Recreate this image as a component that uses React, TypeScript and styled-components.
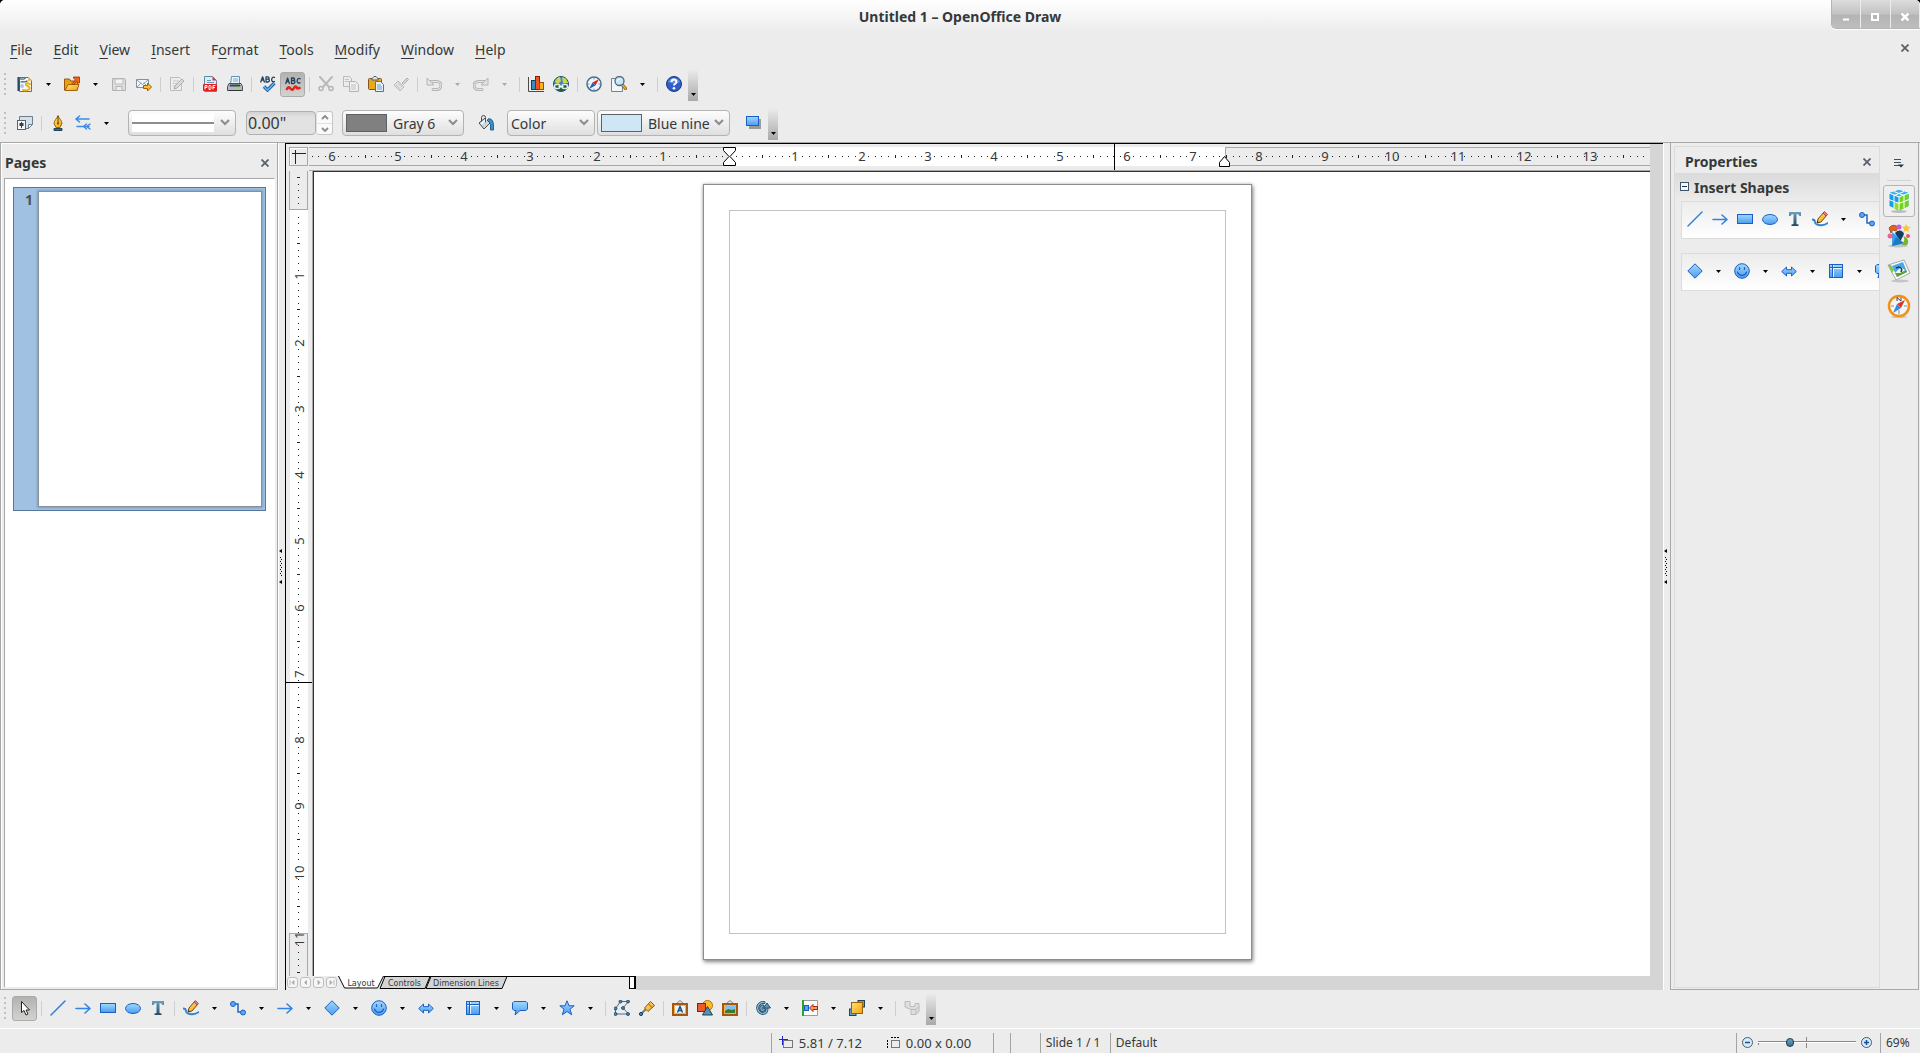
import React from "react";
import styled, { createGlobalStyle, css } from "styled-components";

const GlobalStyle = createGlobalStyle`
  * { box-sizing: border-box; }
  html, body { margin: 0; padding: 0; background: #000; }
  body { font-family: "Noto Sans", "Open Sans", sans-serif; font-size: 14px; color: #34393b; }
  button, input, select { font: inherit; color: inherit; margin: 0; }
`;

/* ---------- icons ---------- */

const HiddenSvg = styled.svg`
  position: absolute;
`;

const Defs = () => (
  <HiddenSvg width="0" height="0" aria-hidden="true">
    <defs>
      <linearGradient id="blue" x1="0" y1="0" x2="0" y2="1">
        <stop offset="0" stopColor="#a2d8fc" />
        <stop offset="1" stopColor="#4a9cf2" />
      </linearGradient>
      <linearGradient id="gold" x1="0" y1="0" x2="1" y2="1">
        <stop offset="0" stopColor="#ffe27a" />
        <stop offset="1" stopColor="#f0a20a" />
      </linearGradient>
      <linearGradient id="steel" x1="0" y1="0" x2="0" y2="1">
        <stop offset="0" stopColor="#6aa0c0" />
        <stop offset="1" stopColor="#234a66" />
      </linearGradient>
    </defs>
  </HiddenSvg>
);

const B = "#1c5fc4";
const P = { fill: "none", strokeLinecap: "round", strokeLinejoin: "round" } as const;

const glyphs: Record<string, React.ReactNode> = {
  newDoc: (
    <>
      <path d="M2.500 1.500h9l3 3v11h-12z" fill="#f4f8fb" stroke="#56738c" />
      <path d="M11 1l4 4h-4z" fill="#e8c46a" />
      <path d="M1.500 1v14" stroke="#24435c" strokeWidth="2" />
      <path d="M1 3.500c2-2 4 1 7-1M4 6c2-1 4 1 6-1" {...P} stroke="#3e6684" strokeWidth="1.300" />
      <path d="M6 14c5 1 8-1 6-3s-5-2-2-4l3 1" {...P} stroke="#f2b21c" strokeWidth="2" />
      <circle cx="5" cy="10" r="2" fill="#a8cbe4" />
    </>
  ),
  open: (
    <>
      <path d="M.5 14V3h5l1 2h7v9z" fill="#e8a20f" stroke="#96570a" />
      <path d="M1 14.500l3-6h11l-2 6z" fill="url(#gold)" stroke="#a3620a" />
      <path d="M8 7.500l3.500-3.500-2-2v-1h6v6h-1l-2-1.500-3 3.500z" fill="#f2661e" stroke="#9c2a0a" strokeWidth=".8" />
    </>
  ),
  save: (
    <>
      <path d="M1.500 2.500h12l1 1v11h-13z" fill="#dedede" stroke="#b0b0b0" />
      <path d="M4 3h8v5H4z" fill="#f3f3f3" stroke="#bcbcbc" />
      <path d="M5 10.500h6v4H5z" fill="#eee" stroke="#b4b4b4" />
    </>
  ),
  mail: (
    <>
      <path d="M.5 3.500h12v8H.5z" fill="#f2f6fa" stroke="#7e93a6" />
      <path d="M1 4l5.500 4.500L12 4M1 11l4-4M12 11L8 7" {...P} stroke="#8ba0b2" />
      <path d="M7.500 9.500h4v-2.500l4 4-4 4V12.500h-4z" fill="#ffbe2e" stroke="#9a5f08" />
    </>
  ),
  edit: (
    <>
      <path d="M1.500 1.500h9l2 2v11h-11z" fill="#ededed" stroke="#bdbdbd" />
      <path d="M4 5h6M4 7.500h5M4 10h3" stroke="#c6c6c6" />
      <path d="M5 13l1-3 7-7 2 2-7 7z" fill="#dcdcdc" stroke="#adadad" />
    </>
  ),
  pdf: (
    <>
      <path d="M2.500 .5h8l4 4v11h-12z" fill="#dcecf7" stroke="#5d88a8" />
      <path d="M10.500 .5l4 4h-4z" fill="#e0322a" />
      <path d="M5 4.500h4M5 6.500h7" stroke="#6c95b2" />
      <rect x="1" y="8" width="14" height="7" rx="1" fill="#e01c1c" />
      <path d="M3 13.500v-4h2v2H3M7 9.500v4h1.500l.5-1v-2l-.5-1zM11 13.500v-4h2.500M11 11.500h2" fill="none" stroke="#fff" />
    </>
  ),
  print: (
    <>
      <path d="M4.500 .5h8v8h-9z" fill="#e9f4fc" stroke="#5a93bb" />
      <path d="M6 3h5M6 5h5" stroke="#79a9cb" />
      <path d="M2 7.500h12l1.500 3v4H.5v-4z" fill="#b4babe" stroke="#4a535a" />
      <path d="M3 8.500h10l.5 2h-11z" fill="#3d454b" />
      <path d="M11 12.500h2" stroke="#7cf03c" strokeWidth="1.500" />
      <path d="M1 14.500h14" stroke="#30373c" />
    </>
  ),
  spell: (
    <>
      <path d="M.8 6L2.600 .8 4.400 6M1.400 4h2.400M6 .8V6h2a1.400 1.400 0 000-2.800H6M6 .8h1.800a1.200 1.200 0 010 2.400M14.500 1.500c-3-2-4.500 5.500 0 4" {...P} stroke="#22405e" strokeWidth="1.300" />
      <path d="M4 10.500l3.500 3.500L14.500 7" fill="none" stroke="#1a5c9e" strokeWidth="3.400" />
      <path d="M4 10.500l3.500 3.500L14.500 7" fill="none" stroke="#5fb2f5" strokeWidth="1.600" />
    </>
  ),
  autospell: (
    <>
      <path d="M.8 7.500L2.600 2l1.800 5.500M1.400 5.500h2.400M6.500 2v5.500h2a1.400 1.400 0 000-3h-2M6.500 2h1.800a1.200 1.200 0 010 2.500M15 2.800c-3-2-4.500 5.500 0 4" {...P} stroke="#22405e" strokeWidth="1.300" />
      <path d="M2 13q1.500-3 3.500-.5t3.500-.5 3.500 .5l2-.5" {...P} stroke="#e3241b" strokeWidth="2.600" />
    </>
  ),
  cut: (
    <>
      <path d="M2 1l9 10M14 1L5 11" {...P} stroke="#b9b9b9" strokeWidth="2" />
      <circle cx="3" cy="12.500" r="2" fill="none" stroke="#b5b5b5" strokeWidth="1.500" />
      <circle cx="13" cy="12.500" r="2" fill="none" stroke="#b5b5b5" strokeWidth="1.500" />
    </>
  ),
  copy: (
    <>
      <path d="M.5 .5h6l2 2v8h-8z" fill="#ececec" stroke="#bababa" />
      <path d="M6.500 5.500h6l3 3v7h-9z" fill="#eee" stroke="#b3b3b3" />
      <path d="M2 3.500h4M2 5.500h4M8 9h5M8 11h5M8 13h5" stroke="#c3c3c3" />
    </>
  ),
  paste: (
    <>
      <rect x=".5" y="2.500" width="13" height="11" rx="1" fill="#e9a91d" stroke="#80561a" />
      <path d="M4 4V2.500l2-2h2l2 2V4z" fill="#dfe6ea" stroke="#4c5c68" />
      <path d="M7.500 5.500h5l3 3v7h-8z" fill="#e6f2fb" stroke="#3f78a4" />
      <path d="M9 9h4M9 11h5M9 13h5" stroke="#6d9dc0" />
    </>
  ),
  brush: (
    <>
      <path d="M9 7l5-5 1.500 1.500-5 5z" fill="#d5d5d5" stroke="#b2b2b2" />
      <path d="M5 5l6 6-4 4-6-6z" fill="#e1e1e1" stroke="#b9b9b9" />
      <path d="M3 9l4 4M5 7l4 4" stroke="#c6c6c6" />
    </>
  ),
  undo: (
    <>
      <path d="M3 5.500h8a4 4 0 010 8H7" {...P} stroke="#b5b5b5" strokeWidth="3" />
      <path d="M3 5.500h8a4 4 0 010 8H7" {...P} stroke="#e6e6e6" />
      <path d="M1 2v7h7z" fill="#e4e4e4" stroke="#b5b5b5" />
    </>
  ),
  redo: (
    <>
      <path d="M13 5.500H5a4 4 0 000 8h4" {...P} stroke="#b5b5b5" strokeWidth="3" />
      <path d="M13 5.500H5a4 4 0 000 8h4" {...P} stroke="#e6e6e6" />
      <path d="M15 2v7H8z" fill="#e4e4e4" stroke="#b5b5b5" />
    </>
  ),
  chart: (
    <>
      <path d="M.5 1v14.500H16" fill="none" stroke="#4a4a4a" />
      <rect x="3.500" y="4.500" width="4" height="9" fill="#3c8cc4" stroke="#123e60" />
      <rect x="7.500" y=".5" width="4" height="13" fill="#f2551c" stroke="#8c1e05" />
      <rect x="11.500" y="6.500" width="4" height="7" fill="#ffb31f" stroke="#8f5303" />
    </>
  ),
  globe: (
    <>
      <circle cx="8" cy="8" r="7.500" fill="#3b86c9" stroke="#1e4b75" />
      <path d="M2 6c1-4 4-5 5-5l1 4-3 3zM9 1c4 1 5 3 6 6l-5 0z" fill="#c9d94c" />
      <path d="M1 9h14c0 3-3 6-7 6s-7-3-7-6z" fill="#1f5d36" />
      <rect x="1.500" y="8.500" width="5.500" height="4" rx="2" fill="none" stroke="#e4e9ec" strokeWidth="1.500" />
      <rect x="9" y="8.500" width="5.500" height="4" rx="2" fill="none" stroke="#e4e9ec" strokeWidth="1.500" />
      <path d="M5.500 10.500h5" stroke="#fff" strokeWidth="1.500" />
    </>
  ),
  compass: (
    <>
      <circle cx="8" cy="8" r="7" fill="#eef6fc" stroke="#4a6e8c" strokeWidth="1.500" />
      <path d="M8 2v1.500M8 12.500V14M2 8h1.500M12.500 8H14" stroke="#7c98ae" />
      <path d="M13 3L9.500 9.500l-3-3z" fill="#e3241b" />
      <path d="M3 13l3.500-6.500 3 3z" fill="#1f62c4" />
    </>
  ),
  find: (
    <>
      <path d="M.5 2.500h7l4 4v9H.5z" fill="#f0f6fa" stroke="#6d8699" />
      <path d="M11 8.500l3.500 4" stroke="#8a5a12" strokeWidth="3" strokeLinecap="round" />
      <path d="M11 8.500l3.500 4" stroke="#f4b52b" strokeWidth="1.500" strokeLinecap="round" />
      <circle cx="8.500" cy="5" r="4.500" fill="#c7e4f8" stroke="#51687a" strokeWidth="1.300" />
      <path d="M6 5a2.500 2.500 0 013-2" {...P} stroke="#fff" />
    </>
  ),
  help: (
    <>
      <circle cx="8" cy="8" r="7.500" fill="#2f5fc6" stroke="#1b3987" />
      <path d="M2 6a6.500 6.500 0 0112 0q-6 3-12 0z" fill="#5d8ae2" />
      <path d="M5.500 6a2.500 2.500 0 115 0c0 1.500-2.500 1.500-2.500 3.500" fill="none" stroke="#fff" strokeWidth="2" />
      <circle cx="8" cy="12.200" r="1.300" fill="#fff" />
    </>
  ),
  styles: (
    <>
      <path d="M2.500 1.500h13v8l-4 4h-9z" fill="#d5e0e8" stroke="#6c7f8e" />
      <path d="M11.500 13.500v-4h4z" fill="#fff" stroke="#6c7f8e" />
      <rect x=".5" y="5.500" width="8" height="9" fill="#f4f7f9" stroke="#52646f" />
      <path d="M4.500 7v6" stroke="#2f4452" />
      <rect x="2.500" y="8" width="4" height="3" fill="#2f4452" />
    </>
  ),
  pen: (
    <>
      <path d="M8 .5c1 3 4 5 4 8l-2 4H6l-2-4c0-3 3-5 4-8z" fill="url(#gold)" stroke="#99630a" />
      <path d="M8 1v7" stroke="#6b4206" />
      <circle cx="8" cy="8.500" r="1" fill="#6b4206" />
      <path d="M4 13.500h8v2H4z" fill="#37708f" stroke="#1f4459" />
    </>
  ),
  arrows: (
    <>
      <path d="M14 4H1M4.500 1L1 4l3.500 3" {...P} stroke="#3a8be8" strokeWidth="1.600" />
      <path d="M2 11.500h12M11.500 9L8.500 11.500l3 2.500M15 9l-3.500 2.500L15 14" {...P} stroke="#3a8be8" strokeWidth="1.400" />
    </>
  ),
  bucket: (
    <>
      <path d="M10 4c4-1 6 2 5.500 11h-3V9l-4-3z" fill="#3d90c8" stroke="#1e5f8d" />
      <path d="M1 8l6-5 5 5-6 6z" fill="#d0d7db" stroke="#414d55" />
      <path d="M3 9l6-5" stroke="#fff" strokeWidth="1.500" />
      <path d="M3.500 6V2.500a2 2 0 014 0V7" {...P} stroke="#414d55" />
    </>
  ),
  shadow: (
    <>
      <rect x="3" y="4" width="12" height="10" fill="#9b9b9b" />
      <rect x=".5" y="1.500" width="12" height="9" fill="url(#blue)" stroke={B} />
    </>
  ),
  select: <path d="M4.500 1.500v11l2.500-2 2 4.500 2-1-2-4h3.500z" fill="#fff" stroke="#222" />,
  line: <path d="M1 15L15 1" {...P} stroke="#2f7fdc" strokeWidth="1.500" />,
  arrow: <path d="M1 8.500h13.500M10 4l5 4.500-5 4.500" {...P} stroke="#3184e4" strokeWidth="1.600" />,
  rect: <rect x=".5" y="3.500" width="15" height="9" fill="url(#blue)" stroke={B} />,
  ellipse: <ellipse cx="8" cy="8.500" rx="7.500" ry="5" fill="url(#blue)" stroke={B} />,
  text: <path d="M2 1h12v4h-1.500q-.5-2-3-2v10l2 .5V15h-7v-1.500l2-.5V3q-2.500 0-3 2H2z" fill="url(#steel)" />,
  pencil: (
    <>
      <path d="M0 8.500q3 0 3 2.500t4 3q5 1 9-2" {...P} stroke="#3184d8" strokeWidth="1.800" />
      <path d="M5 12l1-4 6-7 3 3-6 7z" fill="url(#gold)" stroke="#70470d" />
      <path d="M11 2l1.500-1.500 3 3L14 5z" fill="#ef7c82" stroke="#a83a40" strokeWidth=".8" />
      <path d="M5 12l.5-2 1.500 1.500z" fill="#222" />
    </>
  ),
  connector: (
    <>
      <path d="M3 4h5v8h5" fill="none" stroke="#2467b8" strokeWidth="1.500" />
      <circle cx="3" cy="4" r="2.500" fill="#55a8f5" stroke={B} />
      <circle cx="13" cy="12.500" r="2.500" fill="#55a8f5" stroke={B} />
    </>
  ),
  diamond: <path d="M8 .8L15.200 8 8 15.200.8 8z" fill="url(#blue)" stroke={B} />,
  smiley: (
    <>
      <circle cx="8" cy="8" r="7.300" fill="url(#blue)" stroke={B} />
      <path d="M5.500 4.500v2M10.500 4.500v2M3.500 9c1.500 4.500 7.500 4.500 9 0" {...P} stroke={B} strokeWidth="1.200" />
    </>
  ),
  blockArrow: <path d="M.7 8.500L5.500 4v2.700h5V4l4.800 4.500-4.800 4.500v-2.700h-5V13z" fill="url(#blue)" stroke={B} />,
  flowchart: (
    <>
      <rect x="1.500" y="1.500" width="13" height="13" fill="url(#blue)" stroke={B} />
      <path d="M5 2v12M2 5h12" stroke="#e8f5ff" strokeWidth="2" />
      <path d="M4.500 2v12M2 4.500h12" stroke={B} />
    </>
  ),
  callout: <path d="M2 1.500h12l1.500 1.500v6L14 10.500H8L3 15l1-4.500H2L.5 9V3z" fill="url(#blue)" stroke={B} />,
  star: <path d="M8 .8l2 5h5.200l-4.200 3.400 1.700 5.600L8 11.500l-4.700 3.300L5 9.200.8 5.800H6z" fill="url(#blue)" stroke={B} />,
  points: (
    <>
      <path d="M1.500 14v-5.500L6.500 1.500h8L9 8l5.500 6z" fill="none" stroke="#5c6a74" />
      {[[1.5, 14], [1.5, 8.5], [6.5, 1.5], [14, 1.5], [9, 8], [14, 14]].map(([x, y]) => (
        <circle key={`${x}-${y}`} cx={x} cy={y} r="1.500" fill="#3f8cc0" stroke="#173d5a" strokeWidth=".8" />
      ))}
    </>
  ),
  glue: (
    <>
      <path d="M2 14l5-5" stroke="#6b7a86" strokeWidth="2" />
      <path d="M5.500 8l6-6.500 4 4-6.500 6z" fill="url(#gold)" stroke="#8d5405" />
      <path d="M9.500 4l3.500 3.500" stroke="#8d5405" />
      <circle cx="2" cy="14" r="1.600" fill="#3f8cc0" stroke="#173d5a" />
    </>
  ),
  fontwork: (
    <>
      <path d="M4 4l4-3.500L12 4" fill="none" stroke="#7c7c7c" />
      <rect x="1" y="4" width="14" height="11" fill="#fff" stroke="#a9570b" strokeWidth="2" />
      <rect x="2.500" y="5.500" width="11" height="8" fill="#e5f3fc" stroke="#f0b44c" />
      <path d="M5.500 12.500L8 6.500l2.500 6M6.500 10.500h3" fill="none" stroke="#1e4a6b" strokeWidth="1.400" />
    </>
  ),
  shapes: (
    <>
      <circle cx="10.500" cy="5.500" r="5" fill="#ffbc2e" stroke="#b5730a" />
      <rect x=".5" y="3.500" width="8" height="8" fill="#ef5a2a" stroke="#8c1f06" />
      <path d="M10.500 6.500l5 8.500h-10z" fill="#5b8fb0" stroke="#1e4358" />
    </>
  ),
  gallery: (
    <>
      <path d="M4 4l4-3.500L12 4" fill="none" stroke="#7c7c7c" />
      <rect x="1" y="4" width="14" height="11" fill="#7cc1ef" stroke="#a9570b" strokeWidth="2" />
      <path d="M2.500 13.500V11l4-2 3 1 4-1v4.500z" fill="#3b7a2d" />
      <path d="M2.500 5.500h11v8h-11z" fill="none" stroke="#f0b44c" />
    </>
  ),
  rotate: (
    <>
      <path d="M9 2.500A5.500 5.500 0 107.500 13.500q4.500 0 4.500-5M8 6q-2.500 .5-2 3t3 .5" {...P} stroke="#29536f" strokeWidth="3" />
      <path d="M9 2.500A5.500 5.500 0 107.500 13.500q4.500 0 4.500-5M8 6q-2.500 .5-2 3t3 .5" {...P} stroke="#8fbfdd" strokeWidth="1.200" />
      <path d="M8.500 8l3.500-5 3.500 5z" fill="#5b95ba" stroke="#29536f" />
    </>
  ),
  align: (
    <>
      <path d="M1.500 .5h14v15h-14z" fill="#fbfbfb" stroke="#9c9c9c" />
      <path d="M1 0v16" stroke="#2fa12f" strokeWidth="2" />
      <rect x="2.500" y="5.500" width="4" height="5" fill="#4fa5ee" stroke={B} />
      <path d="M7.500 8L11 4.500v2h4.500v3H11v2z" fill="#f39a5a" stroke="#b0220f" />
    </>
  ),
  arrange: (
    <>
      <rect x="9" y=".5" width="6.500" height="6.500" fill="#6a9ec2" stroke="#1e4358" />
      <rect x=".5" y="9" width="6.500" height="6.500" fill="#6a9ec2" stroke="#1e4358" />
      <rect x="2.500" y="2.500" width="11" height="11" fill="url(#gold)" stroke="#9a5f08" />
    </>
  ),
  extrude: (
    <>
      <path d="M1 1.500h5v5h5v-3h4v8l-3 3H7v-5L1 7z" fill="#dedede" stroke="#bbb" />
      <path d="M7 9.500h5v5M12 9.500l3-3" fill="none" stroke="#bbb" />
    </>
  ),
};

const Icon = ({ name, size = 16 }: { name: string; size?: number }) => (
  <svg width={size} height={size} viewBox="0 0 16 16" aria-hidden="true">
    {glyphs[name]}
  </svg>
);

const Triangle = ({ dim }: { dim?: boolean }) => (
  <svg width="5" height="3" viewBox="0 0 5 3" aria-hidden="true">
    <path d="M0 0h5L2.500 3z" fill={dim ? "#aaa" : "#000"} />
  </svg>
);

const Cross = () => (
  <svg width="8" height="8" viewBox="0 0 8 8" aria-hidden="true">
    <path d="M.5 .5l7 7M7.500 .5l-7 7" stroke="#59616c" strokeWidth="1.800" />
  </svg>
);

/* ---------- window frame ---------- */

const Window = styled.div`
  display: flex;
  flex-direction: column;
  min-height: 100vh;
  background: #ececec;
  border-radius: 5px 5px 0 0;
  overflow: hidden;
`;

const TitleBar = styled.header`
  display: grid;
  grid-template-columns: 89px 1fr 89px;
  height: 32px;
  background: linear-gradient(#fff, #ececec);
`;

const Title = styled.h1`
  grid-column: 2;
  margin: 0;
  text-align: center;
  font-size: 14px;
  line-height: 34px;
  font-weight: 700;
`;

const WindowButtons = styled.div`
  display: flex;
  height: 29px;
  border: 1px solid #b4b4b4;
  border-top: 0;
  border-right: 0;
  border-radius: 0 0 0 5px;
  overflow: hidden;
  box-shadow: 0 1px 0 #fff;
`;

const WindowButton = styled.button`
  flex: 1;
  padding: 2px 0 0;
  border: 0;
  border-right: 1px solid #ececec;
  background: linear-gradient(#dcdcdc, #c2c2c2 50%, #b4b4b4 55%, #bebebe);
`;

const MenuBar = styled.nav`
  display: flex;
  align-items: center;
  gap: 21px;
  height: 36px;
  padding: 0 11px 0 10px;
`;

const MenuItem = styled.button`
  padding: 0;
  border: 0;
  background: none;
  line-height: 20px;
  u { text-underline-offset: 3px; text-decoration-thickness: 1px; }
`;

const PlainButton = styled.button<{ $push?: boolean }>`
  display: flex;
  padding: 0;
  border: 0;
  background: none;
  ${(p) => p.$push && css`margin: 0 0 4px auto;`}
`;

/* ---------- toolbars ---------- */

const Toolbar = styled.div<{ $kind: "standard" | "line" | "drawing" }>`
  display: flex;
  align-items: center;
  padding-left: 3px;
  ${(p) => p.$kind === "standard" && css`height: 34px; padding-bottom: 2px;`}
  ${(p) => p.$kind === "line" && css`height: 40px; padding-top: 2px;`}
  ${(p) => p.$kind === "drawing" && css`height: 38px; padding-bottom: 2px;`}
`;

const Grip = styled.span`
  width: 3px;
  height: 24px;
  margin-right: 6px;
  background: radial-gradient(circle at 2px 2px, #c0c0c0 1px, transparent 1px) 0 0 / 3px 5px;
`;

const ToolButton = styled.button<{ $on?: boolean }>`
  display: grid;
  place-items: center;
  flex: none;
  width: 25px;
  height: 25px;
  padding: 0;
  border: 1px solid transparent;
  border-radius: 3px;
  background: none;
  ${(p) => p.$on && css`
    border-color: #aaa;
    background: linear-gradient(#b2b3b1, #d2d2d0);
  `}
`;

const DropButton = styled.button`
  display: grid;
  place-items: center;
  flex: none;
  width: 22px;
  height: 25px;
  padding: 0;
  border: 0;
  background: none;
`;

const Separator = styled.span`
  flex: none;
  width: 8px;
  height: 15px;
  background: linear-gradient(#cfcfcf, #cfcfcf) 4px 0 / 1px 100% no-repeat;
`;

const ToolbarEnd = styled.button`
  display: flex;
  align-items: flex-end;
  justify-content: center;
  width: 10px;
  height: 32px;
  margin: 2px 0 0 2px;
  padding: 0 0 5px;
  border: 0;
  background: linear-gradient(#ececec, #a9a9a9);
`;

type Item = [string, string, ("drop" | "dim" | "on")?] | "|";

const Tools = ({ items }: { items: Item[] }) => (
  <>
    {items.map((it, i) =>
      it === "|" ? (
        <Separator key={i} />
      ) : (
        <React.Fragment key={i}>
          <ToolButton $on={it[2] === "on"} aria-label={it[1]}>
            <Icon name={it[0]} />
          </ToolButton>
          {(it[2] === "drop" || it[2] === "dim") && (
            <DropButton aria-label={`${it[1]} options`}>
              <Triangle dim={it[2] === "dim"} />
            </DropButton>
          )}
        </React.Fragment>
      )
    )}
  </>
);

const standardItems: Item[] = [
  ["newDoc", "New", "drop"], ["open", "Open", "drop"], ["save", "Save"], ["mail", "E-mail"], "|",
  ["edit", "Edit File"], "|", ["pdf", "Export as PDF"], ["print", "Print"], "|",
  ["spell", "Spelling"], ["autospell", "AutoSpellcheck", "on"], "|",
  ["cut", "Cut"], ["copy", "Copy"], ["paste", "Paste"], ["brush", "Format Paintbrush"], "|",
  ["undo", "Undo", "dim"], ["redo", "Redo", "dim"], "|", ["chart", "Chart"], ["globe", "Hyperlink"], "|",
  ["compass", "Navigator"], ["find", "Zoom", "drop"], "|", ["help", "Help"],
];

const drawingItems: Item[] = [
  ["select", "Select", "on"], "|", ["line", "Line"], ["arrow", "Arrow line"], ["rect", "Rectangle"],
  ["ellipse", "Ellipse"], ["text", "Text"], "|", ["pencil", "Curve", "drop"], ["connector", "Connector", "drop"],
  ["arrow", "Lines and Arrows", "drop"], ["diamond", "Basic Shapes", "drop"], ["smiley", "Symbol Shapes", "drop"],
  ["blockArrow", "Block Arrows", "drop"], ["flowchart", "Flowcharts", "drop"], ["callout", "Callouts", "drop"],
  ["star", "Stars", "drop"], "|", ["points", "Points"], ["glue", "Glue Points"], "|",
  ["fontwork", "Fontwork"], ["shapes", "From File"], ["gallery", "Gallery"], "|",
  ["rotate", "Effects", "drop"], ["align", "Alignment", "drop"], ["arrange", "Arrange", "drop"], "|",
  ["extrude", "Extrusion"],
];

const Combo = styled.label<{ $w: number; $gap: number }>`
  position: relative;
  flex: none;
  width: ${(p) => p.$w}px;
  height: 26px;
  margin-left: ${(p) => p.$gap}px;
`;

const ComboSelect = styled.select<{ $indent: number }>`
  appearance: none;
  width: 100%;
  height: 100%;
  padding: 0 16px 0 ${(p) => p.$indent}px;
  border: 1px solid #b3b3b3;
  border-radius: 4px;
  background: linear-gradient(#fdfdfd, #dfdfdf);
`;

const ComboChevron = styled.svg`
  position: absolute;
  right: 6px;
  top: 9px;
  pointer-events: none;
`;

const Swatch = styled.span<{ $color: string }>`
  position: absolute;
  left: 4px;
  top: 4px;
  width: 41px;
  height: 18px;
  border: 1px solid #5d6266;
  background: ${(p) => p.$color};
  pointer-events: none;
`;

const LinePreview = styled.span`
  position: absolute;
  left: 4px;
  top: 4px;
  width: 82px;
  height: 18px;
  background: linear-gradient(#8e8e8e, #8e8e8e) 0 8px / 100% 2px no-repeat #fff;
  pointer-events: none;
`;

const Chevron = () => (
  <ComboChevron width="10" height="7" viewBox="0 0 10 7" aria-hidden="true">
    <path d="M1 1l4 4 4-4" fill="none" stroke="#8c8c8c" strokeWidth="2" />
  </ComboChevron>
);

const WidthField = styled.input`
  width: 70px;
  height: 24px;
  margin-left: 10px;
  padding: 0 1px;
  border: 1px solid #b0b0b0;
  border-radius: 4px;
  background: linear-gradient(#d2d2d2, #e2e2e2 5px);
  font-size: 16px;
  outline: 0;
`;

const Spinner = styled.div`
  display: grid;
  grid-template-rows: 1fr 1fr;
  width: 17px;
  height: 24px;
  border: 1px solid #c6c6c6;
  border-left-color: #e0e0e0;
  border-radius: 3px;
  background: #fafafa;
`;

const SpinButton = styled.button`
  display: grid;
  place-items: center;
  padding: 0;
  border: 0;
  background: none;
  & + & { border-top: 1px solid #e0e0e0; }
`;

const ToolSlot = styled.div<{ $before: number; $after: number }>`
  display: flex;
  margin: 0 ${(p) => p.$after}px 0 ${(p) => p.$before}px;
`;

/* ---------- work area ---------- */

const Main = styled.main`
  display: flex;
  flex: 1;
  border-top: 1px solid #a8a8a8;
`;

const PagesPanel = styled.aside`
  display: flex;
  flex-direction: column;
  flex: none;
  width: 278px;
  padding: 0 2px 2px 3px;
  border: 1px solid #a8a8a8;
  border-top: 0;
  box-shadow: inset 1px 1px 0 #fff;
`;

const PanelHeader = styled.div<{ $props?: boolean }>`
  display: flex;
  align-items: center;
  justify-content: space-between;
  ${(p) => p.$props
    ? css`height: 26px; padding: 4px 8px 0 10px;`
    : css`height: 35px; padding: 4px 6px 0 1px;`}
`;

const Heading = styled.h2`
  margin: 0;
  font-size: 14px;
  line-height: 20px;
  font-weight: 700;
`;

const PageList = styled.ul`
  flex: 1;
  margin: 0;
  padding: 8px;
  border: 1px solid #a8a8a8;
  border-right-color: #fff;
  border-bottom: 0;
  background: #fff;
  list-style: none;
`;

const PageItem = styled.li`
  display: flex;
  justify-content: space-between;
  width: 253px;
  height: 324px;
  padding: 3px 3px;
  border: 1px solid #56779c;
  background: #a1c1e2;
`;

const PageNumber = styled.span`
  padding-left: 8px;
  font-weight: 700;
  line-height: 18px;
  color: #4b5054;
`;

const Thumbnail = styled.span`
  width: 224px;
  height: 316px;
  border: 1px solid #8a8f98;
  background: #fff;
  box-shadow: 0 0 2px 1px #7c9fc2;
`;

const Splitter = styled.div`
  display: grid;
  align-items: center;
  justify-items: start;
  flex: none;
  width: 7px;
  border-left: 1px solid #fff;
`;

const SplitterMark = () => (
  <svg width="5" height="36" viewBox="0 0 5 36" aria-hidden="true">
    <path d="M0 2l3-2v4zM0 33l3-2v4z" fill="#000" />
    <path d="M1.500 8v20" stroke="#000" strokeDasharray="1 3" />
    <path d="M2.500 10v18" stroke="#000" strokeDasharray="1 3" />
  </svg>
);

const Document = styled.section`
  display: flex;
  flex: 1;
  min-width: 0;
  border-left: 1px solid #000;
  border-top: 1px solid #000;
`;

const View = styled.div`
  display: flex;
  flex-direction: column;
  flex: 1;
  min-width: 0;
`;

const ScrollTrack = styled.div<{ $vertical?: boolean }>`
  background: #d5d5d5;
  ${(p) => (p.$vertical ? css`flex: none; width: 13px;` : css`flex: 1;`)}
`;

const RulerRow = styled.div`
  display: flex;
  height: 27px;
`;

const Corner = styled.div`
  flex: none;
  width: 19px;
  height: 19px;
  margin: 3px 1px 0 3px;
  border: 1px solid #a8a8a8;
  box-shadow: inset 1px 1px 0 #fff;
  svg { display: block; }
`;

const HorizontalRuler = styled.div`
  flex: 1;
  min-width: 0;
  overflow: hidden;
  border-bottom: 1px solid #a8a8a8;
  svg { display: block; }
`;

const CanvasRow = styled.div`
  display: flex;
  flex: 1;
  min-height: 0;
`;

const VerticalRuler = styled.div`
  flex: none;
  width: 27px;
  border-right: 1px solid #a8a8a8;
  svg { display: block; }
`;

const Canvas = styled.div`
  flex: 1;
  padding: 12px 0 16px 389px;
  border-left: 1px solid #333;
  border-top: 1px solid #333;
  background: #fff;
`;

const Sheet = styled.div`
  width: 549px;
  height: 776px;
  padding: 25px;
  border: 1px solid #8c8c8c;
  box-shadow: 1px 2px 4px #8a8a8a, 0 0 3px #c4c4c4;
`;

const Margins = styled.div`
  height: 100%;
  border: 1px solid #c3c3c3;
`;

const INCH = 66.25;

const ticks = (zero: number, from: number, to: number) => {
  const out: { pos: number; kind: "num" | "half" | "dot"; n: number }[] = [];
  for (let i = Math.ceil(((from - zero) / INCH) * 10); zero + (i * INCH) / 10 < to; i++) {
    const pos = Math.round(zero + (i * INCH) / 10);
    const r = Math.abs(i) % 10;
    if (r === 0) {
      if (i !== 0) out.push({ pos, kind: "num", n: Math.abs(i / 10) });
    } else out.push({ pos, kind: r === 5 ? "half" : "dot", n: 0 });
  }
  return out;
};

const HRulerDrawing = () => (
  <svg width="1400" height="26" fontSize="13">
    <rect x="0" y="3" width="1400" height="19" fill="#a8a8a8" />
    <rect x="0" y="4" width="1400" height="17" fill="#ececec" />
    <rect x="420" y="3" width="496" height="19" fill="#fff" />
    <path d="M916.500 3v19" stroke="#a8a8a8" />
    {ticks(420, 2, 1400).map((t) =>
      t.kind === "num" ? (
        <text key={t.pos} x={t.pos} y="17" textAnchor="middle" fill="#34393b">{t.n}</text>
      ) : (
        <rect key={t.pos} x={t.pos} y={t.kind === "half" ? 11 : 12} width="1" height={t.kind === "half" ? 3 : 1} fill="#222" />
      )
    )}
    <path d="M414.500 3.500h12v3l-5.500 6 5.500 6v3h-12v-3l5.500-6-5.500-6z" fill="#fff" stroke="#000" />
    <path d="M910.500 22.500v-4l5-6 5 6v4z" fill="#fff" stroke="#000" />
    <path d="M805.500 0v26" stroke="#000" />
  </svg>
);

const VRulerDrawing = () => (
  <svg width="26" height="805" fontSize="13">
    <rect x="3" y="0" width="19" height="39" fill="#a8a8a8" />
    <rect x="4" y="0" width="17" height="38" fill="#ececec" />
    <rect x="4" y="39" width="18" height="723" fill="#fff" />
    <rect x="3" y="762" width="19" height="43" fill="#a8a8a8" />
    <rect x="4" y="763" width="17" height="42" fill="#ececec" />
    {ticks(39, 4, 803).map((t) =>
      t.kind === "num" ? (
        <text key={t.pos} transform={`translate(18 ${t.pos}) rotate(-90)`} textAnchor="middle" fill="#34393b">{t.n}</text>
      ) : (
        <rect key={t.pos} x={t.kind === "half" ? 11 : 12} y={t.pos} width={t.kind === "half" ? 3 : 1} height="1" fill="#222" />
      )
    )}
    <path d="M0 511.500h26" stroke="#000" />
  </svg>
);

const TabRow = styled.div`
  display: flex;
  height: 14px;
`;

const TabNav = styled.div`
  display: flex;
  gap: 2px;
  padding: 1px 0 0 1px;
  width: 52px;
`;

const NavButton = styled.button`
  display: grid;
  place-items: center;
  width: 11px;
  height: 11px;
  padding: 0;
  border: 1px solid #bdbdbd;
  border-radius: 3px;
  background: #f6f6f6;
`;

const Tabs = styled.div`
  display: flex;
  width: 291px;
  height: 13px;
  border-top: 1px solid #000;
`;

const Tab = styled.button<{ $active?: boolean; $w: number }>`
  position: relative;
  width: ${(p) => p.$w}px;
  height: 12px;
  margin-right: -5px;
  padding: 0;
  border: 0;
  background: none;
  font: 8px/11px "DejaVu Sans", sans-serif;
  z-index: ${(p) => (p.$active ? 1 : 0)};
  svg { position: absolute; left: 0; top: -1px; z-index: -1; }
`;

const SplitHandle = styled.div`
  width: 7px;
  height: 13px;
  border: 1px solid #000;
  border-right-width: 2px;
  background: #fff;
`;

const SheetTab = ({ label, w, active }: { label: string; w: number; active?: boolean }) => (
  <Tab $w={w} $active={active} role="tab" aria-selected={!!active}>
    <svg width={w} height="13" viewBox={`0 0 ${w} 13`} aria-hidden="true">
      <path
        d={active ? `M0 0l6 12.500h${w - 12}l6-12.500z` : `M1 12.500L6 .5h${w - 6}l-5 12z`}
        fill={active ? "#fff" : "#d5d5d5"}
      />
      <path
        d={active ? `M.5 0l6 12h${w - 13}l6-12` : `M1 12.500L6 .5h${w - 6}l-5 12z`}
        fill="none"
        stroke="#000"
      />
    </svg>
    {label}
  </Tab>
);

/* ---------- sidebar ---------- */

const Sidebar = styled.aside`
  display: flex;
  flex: none;
  width: 249px;
  margin-right: 1px;
  padding: 3px 0 1px 3px;
  border: 1px solid #a8a8a8;
  border-top: 0;
`;

const Deck = styled.div`
  flex: none;
  width: 206px;
  border: 1px solid #dcdcdc;
  overflow: hidden;
`;

const SectionHeader = styled.div`
  display: flex;
  align-items: center;
  gap: 5px;
  height: 28px;
  padding: 2px 0 0 5px;
  background: linear-gradient(#dadada, #ececec);
`;

const Collapse = styled.button`
  display: grid;
  place-items: center;
  width: 9px;
  height: 9px;
  margin-bottom: 4px;
  padding: 0;
  border: 1px solid #3f5368;
  background: #f4f8fb;
`;

const Toolbox = styled.div`
  display: flex;
  align-items: center;
  height: 38px;
  margin: 0 0 14px 6px;
  padding-bottom: 2px;
  border: 1px solid #dcdcdc;
  border-right: 0;
  background: linear-gradient(#ececec, #fff);
  overflow: hidden;
`;

const TabBar = styled.div`
  display: flex;
  flex-direction: column;
  align-items: center;
  flex: 1;
`;

const TabMenu = styled.button`
  display: grid;
  place-items: center;
  width: 24px;
  height: 35px;
  margin-bottom: 4px;
  padding: 0;
  border: 0;
  border-bottom: 1px solid #d2d2d2;
  background: none;
`;

const DeckTab = styled.button<{ $on?: boolean }>`
  display: grid;
  place-items: center;
  width: 32px;
  height: 32px;
  margin-bottom: 3px;
  padding: 0;
  border: 1px solid ${(p) => (p.$on ? "#b5b5b5" : "transparent")};
  border-radius: 3px;
  background: ${(p) => (p.$on ? "#efefef" : "none")};
`;

const deckIcons: [string, React.ReactNode][] = [
  ["Properties", (
    <>
      <ellipse cx="12" cy="22.500" rx="8" ry="1.500" fill="#bbb" />
      <path d="M12 1l9.500 3v13L12 21.500 2.500 17V4z" fill="#1b9be8" />
      <path d="M12 1l9.500 3L12 8 2.500 4z" fill="#35b4f6" />
      <path d="M12 8l9.500-4v13L12 21.500z" fill="#76d21c" />
      <path d="M7 14l5-1.500v9L7 19.500z" fill="#8be02e" />
      <path d="M12 7.500V21.500M2 4l10 4 10-4M2 10.500l10 4 10-4M7 6v13.500M17 6v13.500M7 2.500l10 4M17 2.500l-10 4" fill="none" stroke="#fff" />
    </>
  )],
  ["Gallery", (
    <>
      <ellipse cx="11" cy="22" rx="10" ry="1.500" fill="#c4c4c4" />
      <path d="M2 4c3-4 8-3 9 0l-2 3-3-1-2 3z" fill="#e0661c" stroke="#8f3a08" strokeWidth=".7" />
      <path d="M8 9c3-4 8-3 9 1l-4 8z" fill="#143c5c" />
      <path d="M5 8l5 4 6 8-11 2z" fill="#39a0ea" />
      <path d="M5 22l4-9 8 6z" fill="#1f78c0" />
      <path d="M16 12c4 1 7 5 4 9-3 1-6-1-6-1 4-2 4-5 2-8z" fill="#7ab32a" />
      <circle cx="12" cy="3" r="2.500" fill="#c45ae0" />
      <circle cx="3" cy="12" r="2.500" fill="#f0609c" />
      <circle cx="21" cy="12" r="2" fill="#f0506a" />
      <path d="M19 0l1.300 2.500 3.200.5-2.300 2 .6 3L19 6.500 16.500 8l.5-3-2-2 3-.5z" fill="#fcc62a" />
    </>
  )],
  ["Pictures", (
    <>
      <ellipse cx="13" cy="22" rx="9" ry="1.500" fill="#c4c4c4" />
      <path d="M1 6L17 1l6 13L9 21z" fill="#fafafa" stroke="#aaa" />
      <path d="M1 6l4 8 2-3-3-5z" fill="#7fca3c" />
      <path d="M5 7l11-4 4 10-10 5z" fill="#4aa7ea" />
      <path d="M8 14l6-6 6 5-10 5z" fill="#eef7fd" />
      <path d="M8 14l2 4 10-5-1-2-6 3z" fill="#58a51e" />
      <path d="M9 9c4-2 7 0 5 4" fill="none" stroke="#183c5c" strokeWidth="1.500" />
    </>
  )],
  ["Navigator", (
    <>
      <ellipse cx="12" cy="23" rx="8" ry="1" fill="#c4c4c4" />
      <circle cx="12" cy="12" r="10" fill="#f3f6f8" stroke="#f09214" strokeWidth="2.500" />
      <path d="M12 16v4M4 12h3M17 12h3" stroke="#9fb1c0" strokeWidth="1.500" />
      <path d="M10 7V3.500L14 7V3.500" fill="none" stroke="#444" />
      <path d="M18 6l-4 8-4-4z" fill="#e2322a" />
      <path d="M6 19l4-9 4 4z" fill="#3a86dc" />
    </>
  )],
];

/* ---------- status bar ---------- */

const StatusBar = styled.footer`
  display: flex;
  align-items: center;
  height: 25px;
  padding-top: 3px;
  border-top: 1px solid #fff;
  font-size: 12px;
  line-height: 20px;
`;

const StatusSpace = styled.span<{ $grow: number }>`
  flex: ${(p) => p.$grow} 1 0;
`;

const StatusCell = styled.div<{ $w: number; $big?: boolean; $plain?: boolean }>`
  display: flex;
  align-items: center;
  gap: 5px;
  flex: none;
  width: ${(p) => p.$w}px;
  height: 20px;
  padding-left: 5px;
  white-space: nowrap;
  border-left: ${(p) => (p.$plain ? "0" : "1px solid #a4a4a4")};
  ${(p) => p.$big && css`font-size: 13px; padding-left: 7px; gap: 6px;`}
`;

const ZoomRange = styled.input`
  appearance: none;
  width: 98px;
  height: 16px;
  margin: 0;
  background:
    linear-gradient(#8a8a84, #8a8a84) 0 6px / 100% 1px no-repeat,
    linear-gradient(#fff, #fff) 0 7px / 100% 1px no-repeat,
    linear-gradient(#8a8a84, #8a8a84) 0 6px / 1px 4px no-repeat,
    linear-gradient(#8a8a84, #8a8a84) 48px 2px / 1px 11px no-repeat;
  &::-webkit-slider-thumb {
    appearance: none;
    width: 8px;
    height: 9px;
    border: 1px solid #17384e;
    border-radius: 4px;
    background: linear-gradient(#6fa3c2, #3a6f92);
  }
`;

const ZoomIcon = ({ plus }: { plus?: boolean }) => (
  <svg width="11" height="11" viewBox="0 0 11 11" aria-hidden="true">
    <circle cx="5.500" cy="5.500" r="5" fill="#d7ecf9" stroke="#4b5d69" />
    <path d={plus ? "M3 5.500h5M5.500 3v5" : "M3 5.500h5"} stroke="#174f9c" strokeWidth="1.500" />
  </svg>
);

const menus: [string, number][] = [
  ["File", 0], ["Edit", 0], ["View", 0], ["Insert", 0], ["Format", 1], ["Tools", 0], ["Modify", 0], ["Window", 0], ["Help", 0],
];

const navPaths = ["M2 2v5M6 2.500L4 4.500l2 2z", "M5.500 2.500l-2 2 2 2z", "M4 2.500l2 2-2 2z", "M3 2.500l2 2-2 2zM7 2v5"];

export default function App() {
  return (
    <>
      <GlobalStyle />
      <Defs />
      <Window>
        <TitleBar>
          <Title>Untitled 1 – OpenOffice Draw</Title>
          <WindowButtons>
            <WindowButton aria-label="Minimize">
              <svg width="8" height="8"><path d="M1 6.500h6" stroke="#fff" strokeWidth="2" /></svg>
            </WindowButton>
            <WindowButton aria-label="Maximize">
              <svg width="8" height="8"><path d="M1 1h6v6H1z" fill="none" stroke="#fff" strokeWidth="2" /></svg>
            </WindowButton>
            <WindowButton aria-label="Close window">
              <svg width="8" height="8"><path d="M.5 .5l7 7M7.500 .5l-7 7" stroke="#fff" strokeWidth="2.500" /></svg>
            </WindowButton>
          </WindowButtons>
        </TitleBar>

        <MenuBar>
          {menus.map(([m, k]) => (
            <MenuItem key={m}>{m.slice(0, k)}<u>{m[k]}</u>{m.slice(k + 1)}</MenuItem>
          ))}
          <PlainButton $push aria-label="Close document"><Cross /></PlainButton>
        </MenuBar>

        <Toolbar $kind="standard">
          <Grip />
          <Tools items={standardItems} />
          <ToolbarEnd aria-label="More standard tools"><Triangle /></ToolbarEnd>
        </Toolbar>

        <Toolbar $kind="line">
          <Grip />
          <Tools items={[["styles", "Styles"], "|", ["pen", "Line"], ["arrows", "Arrow Style", "drop"]]} />
          <Combo $w={108} $gap={11}>
            <ComboSelect $indent={80} aria-label="Line style"><option></option></ComboSelect>
            <LinePreview />
            <Chevron />
          </Combo>
          <WidthField aria-label="Line width" defaultValue={'0.00"'} />
          <Spinner>
            <SpinButton aria-label="Increase">
              <svg width="8" height="5"><path d="M1 4l3-3 3 3" fill="none" stroke="#8c8c8c" strokeWidth="1.800" /></svg>
            </SpinButton>
            <SpinButton aria-label="Decrease">
              <svg width="8" height="5"><path d="M1 1l3 3 3-3" fill="none" stroke="#8c8c8c" strokeWidth="1.800" /></svg>
            </SpinButton>
          </Spinner>
          <Combo $w={122} $gap={9}>
            <ComboSelect $indent={50} aria-label="Line color"><option>Gray 6</option></ComboSelect>
            <Swatch $color="#808080" />
            <Chevron />
          </Combo>
          <ToolSlot $before={9} $after={9}>
            <Tools items={[["bucket", "Area"]]} />
          </ToolSlot>
          <Combo $w={88} $gap={0}>
            <ComboSelect $indent={3} aria-label="Area style"><option>Color</option></ComboSelect>
            <Chevron />
          </Combo>
          <Combo $w={133} $gap={2}>
            <ComboSelect $indent={50} aria-label="Area color"><option>Blue nine</option></ComboSelect>
            <Swatch $color="#cfe7f5" />
            <Chevron />
          </Combo>
          <ToolSlot $before={11} $after={0}>
            <Tools items={[["shadow", "Shadow"]]} />
          </ToolSlot>
          <ToolbarEnd aria-label="More line tools"><Triangle /></ToolbarEnd>
        </Toolbar>

        <Main>
          <PagesPanel>
            <PanelHeader>
              <Heading>Pages</Heading>
              <PlainButton aria-label="Close pages"><Cross /></PlainButton>
            </PanelHeader>
            <PageList>
              <PageItem>
                <PageNumber>1</PageNumber>
                <Thumbnail />
              </PageItem>
            </PageList>
          </PagesPanel>
          <Splitter><SplitterMark /></Splitter>

          <Document>
            <View>
              <RulerRow>
                <Corner>
                  <svg width="17" height="17"><path d="M2 5.500h14M5.500 2v14" stroke="#222" /></svg>
                </Corner>
                <HorizontalRuler><HRulerDrawing /></HorizontalRuler>
              </RulerRow>
              <CanvasRow>
                <VerticalRuler><VRulerDrawing /></VerticalRuler>
                <Canvas>
                  <Sheet><Margins /></Sheet>
                </Canvas>
              </CanvasRow>
              <TabRow>
                <TabNav>
                  {navPaths.map((d, i) => (
                    <NavButton key={d} aria-label={["First", "Previous", "Next", "Last"][i] + " tab"}>
                      <svg width="9" height="9"><path d={d} fill="#aaa" stroke="#aaa" strokeWidth=".8" /></svg>
                    </NavButton>
                  ))}
                </TabNav>
                <Tabs role="tablist">
                  <SheetTab label="Layout" w={46} active />
                  <SheetTab label="Controls" w={51} />
                  <SheetTab label="Dimension Lines" w={82} />
                </Tabs>
                <SplitHandle />
                <ScrollTrack />
              </TabRow>
            </View>
            <ScrollTrack $vertical />
          </Document>

          <Splitter><SplitterMark /></Splitter>
          <Sidebar>
            <Deck>
              <PanelHeader $props>
                <Heading>Properties</Heading>
                <PlainButton aria-label="Close sidebar"><Cross /></PlainButton>
              </PanelHeader>
              <SectionHeader>
                <Collapse aria-label="Collapse Insert Shapes">
                  <svg width="5" height="1"><path d="M0 .5h5" stroke="#1f3347" /></svg>
                </Collapse>
                <Heading>Insert Shapes</Heading>
              </SectionHeader>
              <Toolbox>
                <Tools
                  items={[
                    ["line", "Line"], ["arrow", "Arrow line"], ["rect", "Rectangle"], ["ellipse", "Ellipse"],
                    ["text", "Text"], ["pencil", "Curve", "drop"], ["connector", "Connector"],
                  ]}
                />
              </Toolbox>
              <Toolbox>
                <Tools
                  items={[
                    ["diamond", "Basic Shapes", "drop"], ["smiley", "Symbol Shapes", "drop"],
                    ["blockArrow", "Block Arrows", "drop"], ["flowchart", "Flowcharts", "drop"], ["callout", "Callouts"],
                  ]}
                />
              </Toolbox>
            </Deck>
            <TabBar>
              <TabMenu aria-label="Sidebar settings">
                <svg width="10" height="10"><path d="M0 1.500h7M0 4.500h7M0 7.500h5" stroke="#3d4f66" /><path d="M4 6.500h6l-3 3z" fill="#1f3347" /></svg>
              </TabMenu>
              {deckIcons.map(([label, art], i) => (
                <DeckTab key={label} $on={i === 0} aria-label={label}>
                  <svg width="24" height="24" viewBox="0 0 24 24" aria-hidden="true">{art}</svg>
                </DeckTab>
              ))}
            </TabBar>
          </Sidebar>
        </Main>

        <Toolbar $kind="drawing">
          <Grip />
          <Tools items={drawingItems} />
          <ToolbarEnd aria-label="More drawing tools"><Triangle /></ToolbarEnd>
        </Toolbar>

        <StatusBar>
          <StatusSpace $grow={4} />
          <StatusCell $w={108} $big>
            <svg width="14" height="14">
              <path d="M0 3.500h9M3.500 0v9" stroke="#2222cc" />
              <path d="M4.500 4.500h9v7h-9z" fill="none" stroke="#000" strokeDasharray="1 1" />
            </svg>
            5.81 / 7.12
          </StatusCell>
          <StatusCell $w={114} $big $plain>
            <svg width="14" height="14">
              <path d="M1.500 4v9M5 1.500h9" stroke="#000" strokeDasharray="2 1" />
              <path d="M5.500 4.500h8v7h-8z" fill="none" stroke="#000" strokeDasharray="1 1" />
            </svg>
            0.00 x 0.00
          </StatusCell>
          <StatusCell $w={17} />
          <StatusCell $w={30} />
          <StatusCell $w={70}>Slide 1 / 1</StatusCell>
          <StatusCell $w={48}>Default</StatusCell>
          <StatusSpace $grow={3} />
          <StatusCell $w={144}>
            <PlainButton aria-label="Zoom out"><ZoomIcon /></PlainButton>
            <ZoomRange type="range" min={0} max={100} defaultValue={31} aria-label="Zoom" />
            <PlainButton aria-label="Zoom in"><ZoomIcon plus /></PlainButton>
          </StatusCell>
          <StatusCell $w={40}>69%</StatusCell>
        </StatusBar>
      </Window>
    </>
  );
}
